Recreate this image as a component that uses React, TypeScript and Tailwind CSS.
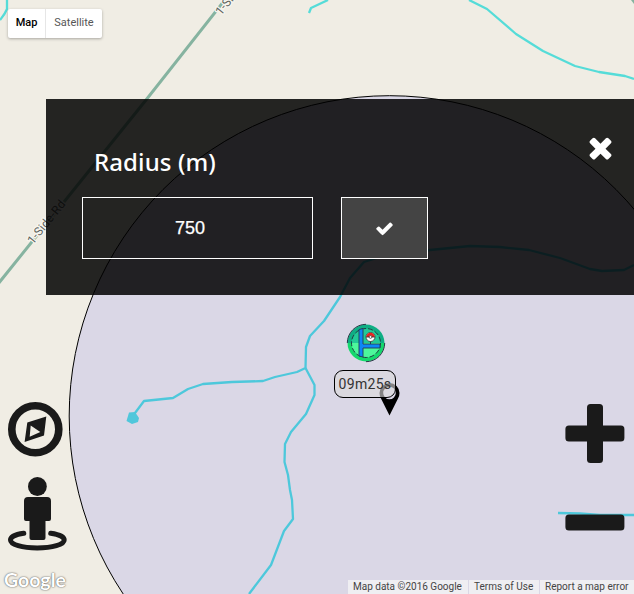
import React from "react";

const RIVERS = [
  "M7 0V9Q5 14 0 20",
  "M309 13L311 8L328 0",
  "M469 0L487 9L516 34L543 51L575 66L599 72L625 76L634 79",
  "M634 265L624 270L602 271L590 269L560 258L529 250L500 247L470 246L430 250L380 257L364 262L350 278L340 297L324 321L310 336L306 347L305.5 368L297 372L275 377L263 381L232 382L203 384L188 389L173 398L144 401L132 417",
  "M305.5 368L314.5 385V395L306 414L291 432L285 444L284.5 462L288 475L290 490L292 500L293 519L284 531L271 565L249 594",
  "M558 513L580 513.5L600 515H634",
];

function MapCanvas() {
  return (
    <svg className="absolute inset-0" width="634" height="594" viewBox="0 0 634 594">
      <rect width="634" height="594" fill="#f0ede4" />
      <g fill="none" stroke="#55dcd8" strokeWidth="2.300" strokeLinejoin="round">
        {RIVERS.map((d) => (
          <path key={d} d={d} />
        ))}
      </g>
      <path d="M129 412.500L135 412L139 418L138 422L132 424L126.500 421Z" fill="#58dbd8" />
      <path d="M-2 284L146 100L228 -4" stroke="#86b3a0" strokeWidth="3" fill="none" />
      <path d="M631 0H634V4Z" fill="#86b3a0" />
      <g
        fontFamily="Roboto, sans-serif"
        fontSize="12"
        fill="#5d625d"
        stroke="#f7f5ee"
        strokeWidth="2.500"
        strokeLinejoin="round"
        paintOrder="stroke"
        letterSpacing="0.2"
      >
        <text transform="translate(33 245) rotate(-51)">1-Side-Rd</text>
        <text transform="translate(221 16) rotate(-51)">1-Si</text>
      </g>
      <circle cx="389.500" cy="416" r="320.300" fill="#0000ff" fillOpacity="0.09" stroke="#000" strokeWidth="1" />
    </svg>
  );
}

function PlaceMarkers() {
  return (
    <>
      <svg className="absolute left-[379px] top-[382px]" width="22" height="34" viewBox="0 0 22 34">
        <path
          fillRule="evenodd"
          d="M10.500 1A10 10 0 0 1 20.500 11Q20.500 14 19 16.500L10.500 33.500L2 16.500Q.500 14 .500 11A10 10 0 0 1 10.500 1ZM10.500 4.700A6.300 6.300 0 1 0 10.500 17.300A6.300 6.300 0 1 0 10.500 4.700Z"
        />
      </svg>
      <svg className="absolute left-[346px] top-[323px]" width="40" height="40" viewBox="0 0 40 40">
        <path d="M1.500 20A18.500 18.500 0 0 1 38.500 20Z" fill="#0fae84" />
        <path d="M1.500 20A18.500 18.500 0 0 0 38.500 20Z" fill="#14d86c" />
        <path d="M5.500 20A14.500 14.500 0 0 1 34.500 20Z" fill="#22c997" />
        <path d="M5.500 20A14.500 14.500 0 0 0 34.500 20Z" fill="#4df79b" />
        <path d="M1.300 20A18.700 18.700 0 0 1 20 1.300M38.700 20A18.700 18.700 0 0 1 20 38.700" fill="none" stroke="#2a3b48" strokeWidth="1" />
        <circle cx="20" cy="20" r="14.500" fill="none" stroke="#233b45" strokeWidth="1" strokeDasharray="5 2" />
        <path d="M13 6.500L17 5.500V21H34V25H17V34L13 33Z" fill="#0d87f5" stroke="#243a55" strokeWidth="0.900" />
        <path d="M24.500 18V21" stroke="#243a55" />
        <circle cx="24.500" cy="14" r="4.500" fill="#fff" stroke="#333" strokeWidth="0.800" />
        <path d="M20.300 14A4.200 4.200 0 0 1 28.700 14Z" fill="#e8241f" />
        <path d="M20 14H29" stroke="#333" strokeWidth="0.800" />
        <circle cx="24.500" cy="14" r="1.400" fill="#fff" stroke="#333" strokeWidth="0.700" />
      </svg>
      <div className="absolute left-[334px] top-[370px] flex h-7 w-[62px] items-center justify-center rounded-[9px] border border-black bg-[#dcdadb]/60 font-[Roboto,sans-serif] text-[14px] tracking-[0.3px] text-[#333]">
        09m25s
      </div>
    </>
  );
}

function MapTypeControl() {
  return (
    <div className="absolute left-2 top-[9px] flex h-[29px] w-[94px] rounded-[2px] bg-white text-[11px] shadow-[0_1px_3px_rgba(0,0,0,0.3)]">
      <button className="w-[38px] border-r border-[#e6e6e6] font-medium text-black">Map</button>
      <button className="flex-1 text-[#565656]">Satellite</button>
    </div>
  );
}

function RadiusPanel() {
  return (
    <section className="absolute left-[46px] top-[99px] h-[196px] w-[588px] bg-black/85 pl-9 pr-[17px] pt-9 text-white">
      <header className="flex h-[62px] items-start justify-between pl-3">
        <h1 className="pt-[10px] font-['Noto_Sans',sans-serif] text-[24px] font-medium leading-[34px] tracking-[0.1px]">
          Radius (m)
        </h1>
        <button aria-label="Close" className="-mt-1">
          <svg width="33" height="33" viewBox="0 0 1792 1792" fill="currentColor">
            <path d="M1490 1322q0 40-28 68l-136 136q-28 28-68 28t-68-28l-294-294-294 294q-28 28-68 28t-68-28l-136-136q-28-28-28-68t28-68l294-294-294-294q-28-28-28-68t28-68l136-136q28-28 68-28t68 28l294 294 294-294q28-28 68-28t68 28l136 136q28 28 28 68t-28 68l-294 294 294 294q28 28 28 68z" />
          </svg>
        </button>
      </header>
      <div className="flex gap-7">
        <input
          defaultValue="750"
          className="h-[62px] w-[231px] border border-white bg-transparent px-4 text-center font-['Liberation_Sans',Arial,sans-serif] text-[18px] outline-none [-webkit-text-stroke:0.25px_white] pr-[31px]"
        />
        <button aria-label="Apply" className="flex h-[62px] w-[87px] items-center justify-center border border-white bg-[#444]">
          <svg width="19" height="19" viewBox="0 0 1792 1792" fill="currentColor">
            <path d="M1671 566q0 40-28 68l-724 724-136 136q-28 28-68 28t-68-28l-136-136-362-362q-28-28-28-68t28-68l136-136q28-28 68-28t68 28l294 295 656-657q28-28 68-28t68 28l136 136q28 28 28 68z" />
          </svg>
        </button>
      </div>
    </section>
  );
}

function LocationControls() {
  return (
    <div className="absolute left-[6px] top-[400px] flex flex-col gap-4">
      <button aria-label="Compass">
        <svg width="60" height="60" viewBox="0 0 60 60" className="block">
          <circle cx="29.300" cy="29.200" r="23.500" fill="none" stroke="#1a1a1a" strokeWidth="7.600" />
          <path
            fillRule="evenodd"
            fill="#1a1a1a"
            d="M40.300 16.600L21.300 22.600L18.600 42L38 35.500ZM24.700 25.500L34.300 32L23.700 36.700Z"
          />
        </svg>
      </button>
      <button aria-label="Street view">
        <svg width="64" height="78" viewBox="0 0 64 78" className="block">
          <g fill="#1a1a1a">
            <circle cx="31.400" cy="10.500" r="9.400" />
            <path d="M22 21H41Q45 21 45 25V43Q45 45 43 45H39.500V62Q39.500 64 37.500 64H25.500Q23.500 64 23.500 62V45H20Q18 45 18 43V25Q18 21 22 21Z" />
          </g>
          <path
            d="M17.800 57.300C9 58.500 4.500 61 4.500 64C4.500 68.500 16 72 31.200 72S58.200 68.500 58.200 64C58.200 61 53.500 58.500 44.700 57.300"
            fill="none"
            stroke="#1a1a1a"
            strokeWidth="5"
            strokeLinecap="round"
          />
        </svg>
      </button>
    </div>
  );
}

function ZoomControls() {
  return (
    <div className="absolute left-[565px] top-[404px] flex flex-col gap-[51px] text-[#1a1a1a]">
      <button aria-label="Zoom in">
        <svg width="60" height="59" viewBox="0 0 60 59" fill="currentColor" className="block">
          <rect x="0.400" y="21.500" width="59" height="16" rx="3.500" />
          <rect x="22" y="0" width="16" height="59" rx="3.500" />
        </svg>
      </button>
      <button aria-label="Zoom out">
        <svg width="60" height="18" viewBox="0 0 60 18" fill="currentColor" className="block">
          <rect x="0.400" y="0.500" width="59" height="16" rx="3.500" />
        </svg>
      </button>
    </div>
  );
}

function Attribution() {
  return (
    <footer className="absolute bottom-0 right-0 flex h-[14px] w-[286px] gap-px whitespace-nowrap text-[10px] leading-[14px] text-[#444]">
      <span className="w-[120px] bg-[#f5f5f5]/75 pl-[5px]">Map data ©2016 Google</span>
      <span className="w-[70px] bg-[#f5f5f5]/75 pl-[5px]">Terms of Use</span>
      <span className="flex-1 bg-[#f5f5f5]/75 pl-[5px]">Report a map error</span>
    </footer>
  );
}

export default function App() {
  return (
    <main className="relative h-[594px] w-[634px] overflow-hidden font-[Roboto,sans-serif]">
      <MapCanvas />
      <PlaceMarkers />
      <MapTypeControl />
      <RadiusPanel />
      <LocationControls />
      <ZoomControls />
      <span className="absolute left-1 top-[568px] font-[Lato,sans-serif] text-[19.500px] font-bold leading-6 text-white [text-shadow:0_0_2px_rgba(0,0,0,0.5),0_0_1px_rgba(0,0,0,0.5)]">
        Google
      </span>
      <Attribution />
    </main>
  );
}
